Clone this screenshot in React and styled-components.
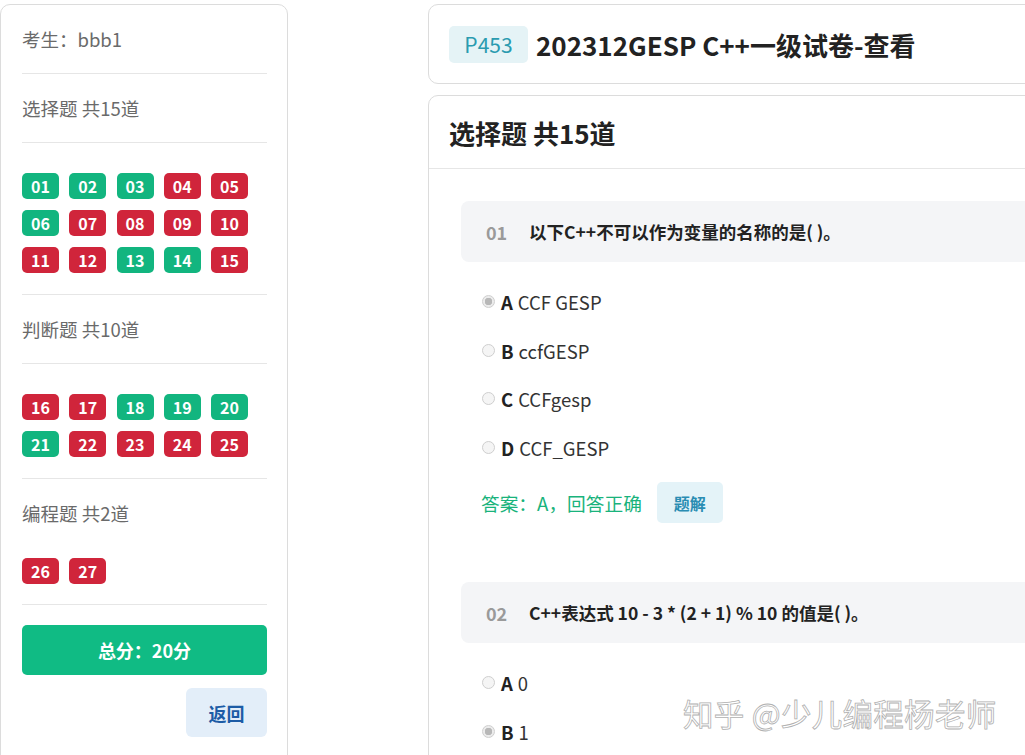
import React from 'react'
import styled, { createGlobalStyle } from 'styled-components'

const GlobalStyle = createGlobalStyle`
  html, body {
    margin: 0;
    padding: 0;
    background: #fff;
    overflow: hidden;
  }
  body {
    font-family: "Noto Sans CJK SC", "Noto Sans", sans-serif;
    color: #333;
  }
`

const GREEN = '#12b57f'
const RED = '#d0253b'

// true = correct (green), false = wrong (red)
const sections = [
  {
    title: '选择题 共15道',
    items: [1,1,1,0,0, 1,0,0,0,0, 0,0,1,1,0],
    start: 1,
    tight: false,
  },
  {
    title: '判断题 共10道',
    items: [0,0,1,1,1, 1,0,0,0,0],
    start: 16,
    tight: false,
  },
  {
    title: '编程题 共2道',
    items: [0,0],
    start: 26,
    tight: true,
  },
]

const questions = [
  {
    no: '01',
    text: '以下C++不可以作为变量的名称的是( )。',
    options: [
      ['A', 'CCF GESP'],
      ['B', 'ccfGESP'],
      ['C', 'CCFgesp'],
      ['D', 'CCF_GESP'],
    ],
    picked: 'A',
    answer: '答案：A，回答正确',
  },
  {
    no: '02',
    text: 'C++表达式 10 - 3 * (2 + 1) % 10 的值是( )。',
    options: [
      ['A', '0'],
      ['B', '1'],
    ],
    picked: 'B',
  },
]

function App() {
  return (
    <>
      <GlobalStyle />
      <Page>
        <Sidebar>
          <Label>考生：bbb1</Label>
          <Divider />
          {sections.map((s) => (
            <React.Fragment key={s.title}>
              <Label>{s.title}</Label>
              {!s.tight && <Divider />}
              <BadgeGrid tight={s.tight}>
                {s.items.map((ok, i) => (
                  <Badge key={i} ok={ok}>
                    {String(s.start + i).padStart(2, '0')}
                  </Badge>
                ))}
              </BadgeGrid>
              <Divider />
            </React.Fragment>
          ))}
          <TotalButton>总分：20分</TotalButton>
          <BackRow>
            <BackButton>返回</BackButton>
          </BackRow>
        </Sidebar>

        <Main>
          <HeaderCard>
            <Pid>P453</Pid>
            <Title>202312GESP C++一级试卷-查看</Title>
          </HeaderCard>

          <PaperCard>
            <PaperHead>选择题 共15道</PaperHead>
            <PaperBody>
              {questions.map((q) => (
                <Question key={q.no}>
                  <Stem>
                    <StemNo>{q.no}</StemNo>
                    <StemText>{q.text}</StemText>
                  </Stem>
                  <Options>
                    {q.options.map(([k, v]) => (
                      <Option key={k}>
                        <Radio checked={q.picked === k} />
                        <OptKey>{k}</OptKey>
                        <span>{v}</span>
                      </Option>
                    ))}
                  </Options>
                  {q.answer && (
                    <AnswerRow>
                      <AnswerText>{q.answer}</AnswerText>
                      <SolveButton>题解</SolveButton>
                    </AnswerRow>
                  )}
                </Question>
              ))}
            </PaperBody>
          </PaperCard>
        </Main>

        <Watermark>知乎 @少儿编程杨老师</Watermark>
      </Page>
    </>
  )
}

export default App

const Page = styled.div`
  position: relative;
  display: grid;
  grid-template-columns: 288px 640px;
  column-gap: 140px;
  align-items: start;
  padding-top: 4px;
  width: 1025px;
  height: 755px;
  overflow: hidden;
  box-sizing: border-box;
`

const Sidebar = styled.div`
  box-sizing: border-box;
  border: 1px solid #dcdcdc;
  border-radius: 10px;
  padding: 0 20px 30px 21px;
  display: flex;
  flex-direction: column;
`

const Label = styled.div`
  height: 68px;
  display: flex;
  align-items: center;
  font-size: 18.5px;
  color: #6a6a6a;
`

const Divider = styled.div`
  height: 1px;
  background: #e6e6e6;
`

const BadgeGrid = styled.div`
  display: grid;
  grid-template-columns: repeat(5, 37px);
  column-gap: 10.25px;
  row-gap: 11px;
  padding: ${p => (p.tight ? '11px 0 20px' : '30px 0 21px')};
`

const Badge = styled.div`
  height: 26px;
  border-radius: 5px;
  background: ${p => (p.ok ? GREEN : RED)};
  color: #fff;
  font-size: 16px;
  font-weight: 700;
  display: flex;
  align-items: center;
  justify-content: center;
`

const TotalButton = styled.div`
  margin-top: 20px;
  height: 50px;
  border-radius: 5px;
  background: #10bb84;
  color: #fff;
  font-size: 18px;
  font-weight: 700;
  display: flex;
  align-items: center;
  justify-content: center;
`

const BackRow = styled.div`
  display: flex;
  justify-content: flex-end;
  margin-top: 13px;
`

const BackButton = styled.div`
  width: 81px;
  height: 49px;
  border-radius: 6px;
  background: #e3eef9;
  color: #1d5ca6;
  font-size: 18px;
  font-weight: 700;
  display: flex;
  align-items: center;
  justify-content: center;
`

const Main = styled.div`
  display: flex;
  flex-direction: column;
  gap: 11px;
`

const HeaderCard = styled.div`
  box-sizing: border-box;
  height: 80px;
  border: 1px solid #dcdcdc;
  border-radius: 10px;
  padding: 0 20px;
  display: flex;
  align-items: center;
  gap: 8px;
`

const Pid = styled.div`
  width: 79px;
  height: 37px;
  border-radius: 5px;
  background: #e5f3f6;
  color: #2a9bb0;
  font-size: 21px;
  display: flex;
  align-items: center;
  justify-content: center;
`

const Title = styled.div`
  font-size: 26px;
  font-weight: 700;
  color: #222;
`

const PaperCard = styled.div`
  border: 1px solid #dcdcdc;
  border-radius: 10px;
  height: 800px;
`

const PaperHead = styled.div`
  height: 72px;
  padding: 0 20px;
  display: flex;
  align-items: center;
  font-size: 26px;
  font-weight: 700;
  color: #222;
  border-bottom: 1px solid #e6e6e6;
`

const PaperBody = styled.div`
  padding: 32px 0 0 32px;
  display: flex;
  flex-direction: column;
  gap: 59px;
`

const Question = styled.div`
  display: flex;
  flex-direction: column;
`

const Stem = styled.div`
  height: 61px;
  border-radius: 8px 0 0 8px;
  background: #f4f5f7;
  display: flex;
  align-items: center;
  padding-left: 25px;
  font-size: 17.5px;
  font-weight: 700;
`

const StemNo = styled.span`
  width: 43px;
  color: #9a9a9a;
  font-size: 18px;
`

const StemText = styled.span`
  color: #222;
`

const Options = styled.div`
  display: flex;
  flex-direction: column;
  padding: 16px 0 0 20px;
`

const Option = styled.div`
  height: 48.5px;
  display: flex;
  align-items: center;
  font-size: 18.5px;
  color: #333;
`

const Radio = styled.span`
  box-sizing: border-box;
  width: 13px;
  height: 13px;
  margin: -1px 6px 0 1px;
  border-radius: 50%;
  border: 1px solid #cfcfcf;
  background: ${p => (p.checked ? 'radial-gradient(circle, #b8b8b8 0 3.5px, #ececec 4px)' : '#f5f5f5')};
`

const OptKey = styled.b`
  color: #222;
  margin-right: 5px;
`

const AnswerRow = styled.div`
  display: flex;
  align-items: center;
  gap: 15px;
  padding: 10px 0 0 20px;
`

const AnswerText = styled.span`
  font-size: 18.7px;
  color: #19b37c;
`

const SolveButton = styled.div`
  width: 66px;
  height: 41px;
  border-radius: 5px;
  background: #e4f3f8;
  color: #2a8db3;
  font-size: 16px;
  font-weight: 700;
  display: flex;
  align-items: center;
  justify-content: center;
`

const Watermark = styled.div`
  position: absolute;
  left: 683px;
  top: 691px;
  font-size: 30.5px;
  color: rgba(255, 255, 255, 0.9);
  -webkit-text-stroke: 0.8px #b0b0b0;
  letter-spacing: 0.3px;
  white-space: nowrap;
`
